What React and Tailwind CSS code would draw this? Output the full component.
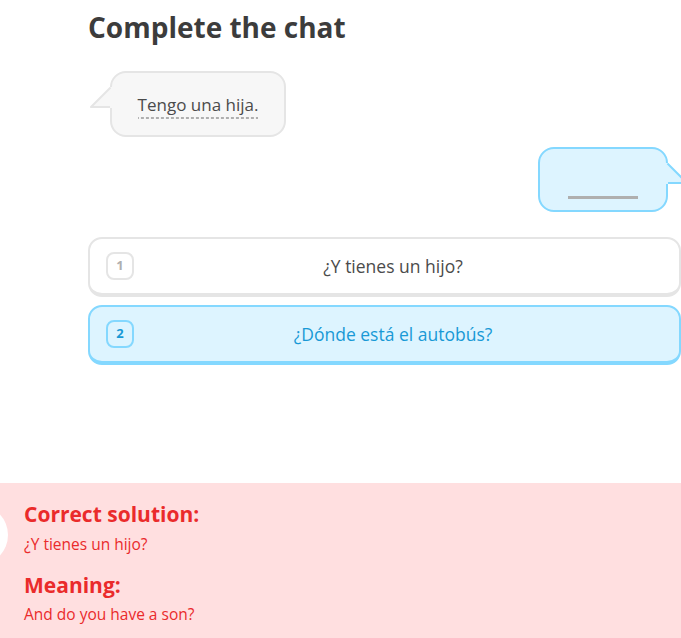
import React from "react";

const font = { fontFamily: "'Open Sans', 'Noto Sans', sans-serif" };

const choices = [
  { n: 1, text: "¿Y tienes un hijo?", selected: false },
  { n: 2, text: "¿Dónde está el autobús?", selected: true },
];

function Tail({ side, fill, stroke }) {
  // little speech-bubble tail that sits over the bubble border
  const flip = side === "right";
  return (
    <svg
      width="22"
      height="22"
      viewBox="0 0 22 22"
      className={
        flip
          ? "absolute top-[14px] right-[-22px] -scale-x-100"
          : "absolute top-[14px] left-[-22px]"
      }
    >
      <polygon points="20,0 22,0 22,21 1,21 " fill={fill} />
      <polyline
        points="20.5,0.5 1,20 20,20"
        fill="none"
        stroke={stroke}
        strokeWidth="2"
        strokeLinejoin="round"
      />
    </svg>
  );
}

export default function App() {
  return (
    <div className="relative w-[681px] h-[638px] overflow-hidden bg-white flex flex-col" style={font}>
      <div className="pl-[88px] pt-[8px] flex flex-col">
        <h1 className="text-[28px] leading-[38px] font-bold text-[#3c3c3c]">Complete the chat</h1>

        <div className="relative ml-[22px] mt-[25px] w-[176px] h-[66px] rounded-2xl border-2 border-[#e5e5e5] bg-[#f7f7f7] flex items-center justify-center">
          <Tail side="left" fill="#f7f7f7" stroke="#e5e5e5" />
          <span className="text-[17px] text-[#4b4b4b] leading-[22px] pb-[3px] mt-[4px] bg-[linear-gradient(to_right,#afafaf_60%,transparent_0)] bg-[length:5px_2px] bg-repeat-x bg-bottom">
            Tengo una hija.
          </span>
        </div>

        <div className="relative ml-[450px] mt-[10px] w-[130px] h-[65px] rounded-2xl border-2 border-[#84d8ff] bg-[#ddf4ff] flex items-end justify-center pb-[11px]">
          <Tail side="right" fill="#ddf4ff" stroke="#84d8ff" />
          <div className="w-[70px] h-[3px] bg-[#afafaf]" />
        </div>

        <div className="mt-[25px] flex flex-col gap-[8px] w-[593px]">
          {choices.map((c) => (
            <div
              key={c.n}
              className={
                c.selected
                  ? "h-[60px] flex items-center px-[16px] rounded-[14px] border-2 border-b-4 border-[#84d8ff] bg-[#ddf4ff]"
                  : "h-[60px] flex items-center px-[16px] rounded-[14px] border-2 border-b-4 border-[#e5e5e5] bg-white"
              }
            >
              <span
                className={
                  c.selected
                    ? "w-[28px] h-[28px] flex items-center justify-center rounded-lg border-2 border-[#84d8ff] text-[13px] font-bold text-[#1899d6]"
                    : "w-[28px] h-[28px] flex items-center justify-center rounded-lg border-2 border-[#e5e5e5] text-[13px] font-bold text-[#afafaf]"
                }
              >
                {c.n}
              </span>
              <span
                className={
                  c.selected
                    ? "flex-1 mr-[11px] text-center text-[17.5px] text-[#1899d6]"
                    : "flex-1 mr-[11px] text-center text-[17.5px] text-[#4b4b4b]"
                }
              >
                {c.text}
              </span>
            </div>
          ))}
        </div>
      </div>

      <div className="relative mt-auto h-[155px] bg-[#ffdfe0] pl-[24px] pt-[17px] text-[#ea2b2b]">
        <div className="absolute left-[-52px] top-[22px] w-[60px] h-[60px] rounded-full bg-white" />
        <h2 className="text-[21px] leading-[28px] font-bold">Correct solution:</h2>
        <p className="text-[15.5px] leading-[20px] mt-[6px]">¿Y tienes un hijo?</p>
        <h2 className="text-[21px] leading-[28px] font-bold mt-[17px]">Meaning:</h2>
        <p className="text-[15.5px] leading-[20px] mt-[5px]">And do you have a son?</p>
      </div>
    </div>
  );
}
